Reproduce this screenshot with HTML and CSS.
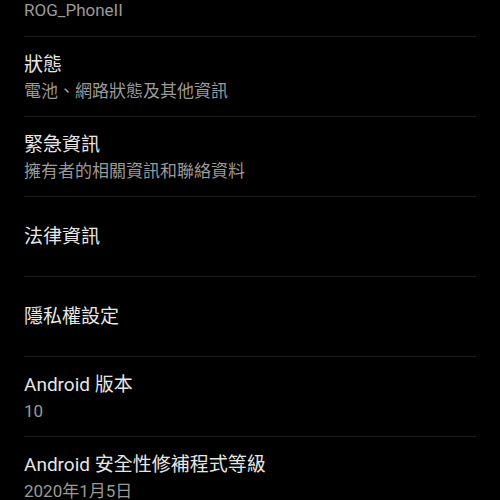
FILE: index.html
```html
<!DOCTYPE html>
<html lang="zh-Hant">
<head>
  <meta charset="UTF-8" />
  <meta name="viewport" content="width=device-width, initial-scale=1.0" />
  <title>關於手機</title>
  <link rel="stylesheet" href="styles.css">
</head>
<body>
  <div class="settings-list">
    <div class="setting-item first">
      <div class="setting-title">型號</div>
      <div class="setting-summary">ROG_PhoneII</div>
    </div>
    <div class="setting-item">
      <div class="setting-title">狀態</div>
      <div class="setting-summary">電池、網路狀態及其他資訊</div>
    </div>
    <div class="setting-item">
      <div class="setting-title">緊急資訊</div>
      <div class="setting-summary">擁有者的相關資訊和聯絡資料</div>
    </div>
    <div class="setting-item">
      <div class="setting-title">法律資訊</div>
    </div>
    <div class="setting-item">
      <div class="setting-title">隱私權設定</div>
    </div>
    <div class="setting-item">
      <div class="setting-title">Android 版本</div>
      <div class="setting-summary">10</div>
    </div>
    <div class="setting-item">
      <div class="setting-title">Android 安全性修補程式等級</div>
      <div class="setting-summary">2020年1月5日</div>
    </div>
  </div>
</body>
</html>
```

FILE: styles.css
```css
body {
  margin: 0;
  background: #000;
  font-family: Roboto, "Noto Sans CJK TC", sans-serif;
  overflow: hidden;
}
.settings-list {
  margin-top: -44px;
}
.setting-item {
  height: 80px;
  box-sizing: border-box;
  margin: 0 24px;
  display: flex;
  flex-direction: column;
  justify-content: center;
  border-top: 1px solid #1c1c1c;
}
.setting-item.first {
  border-top: none;
}
.setting-title {
  color: #e6e6e6;
  font-size: 19px;
  line-height: 28px;
}
.setting-summary {
  color: #9a9a9a;
  font-size: 17px;
  line-height: 24px;
}
```
